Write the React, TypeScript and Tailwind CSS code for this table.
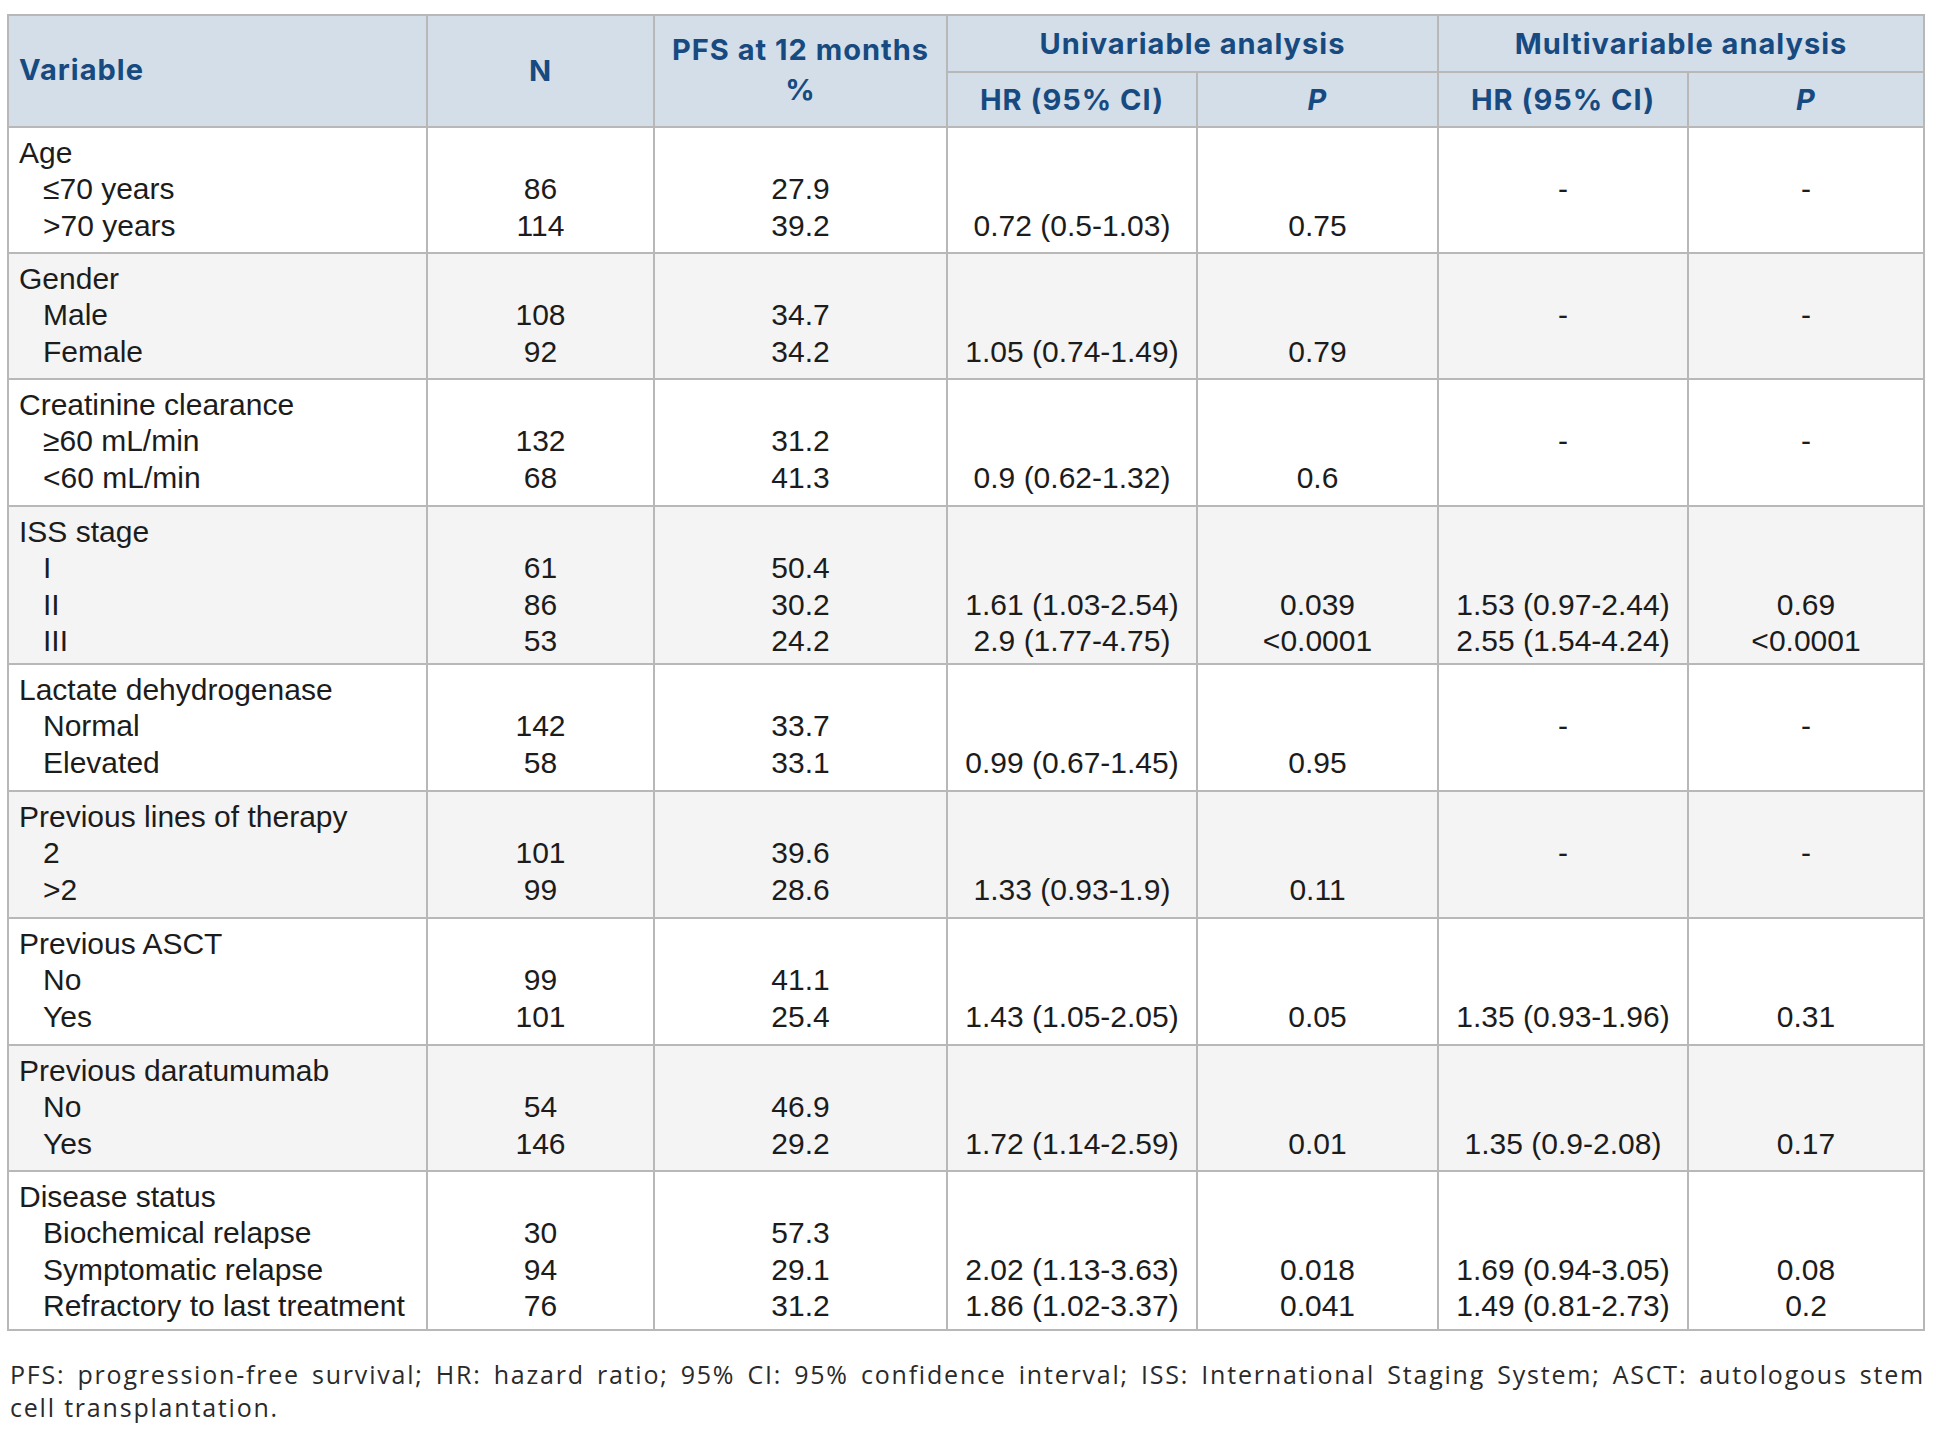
import React from "react";

type Row = {
  v: string[];
  n: string[];
  pfs: string[];
  hr: string[];
  p: string[];
  mhr: string[];
  mp: string[];
  h: string;
};

const rows: Row[] = [
  { v: ["Age", "≤70 years", ">70 years"], n: ["", "86", "114"], pfs: ["", "27.9", "39.2"], hr: ["", "", "0.72 (0.5-1.03)"], p: ["", "", "0.75"], mhr: ["", "-", ""], mp: ["", "-", ""], h: "h-[126px]" },
  { v: ["Gender", "Male", "Female"], n: ["", "108", "92"], pfs: ["", "34.7", "34.2"], hr: ["", "", "1.05 (0.74-1.49)"], p: ["", "", "0.79"], mhr: ["", "-", ""], mp: ["", "-", ""], h: "h-[126px]" },
  { v: ["Creatinine clearance", "≥60 mL/min", "<60 mL/min"], n: ["", "132", "68"], pfs: ["", "31.2", "41.3"], hr: ["", "", "0.9 (0.62-1.32)"], p: ["", "", "0.6"], mhr: ["", "-", ""], mp: ["", "-", ""], h: "h-[127px]" },
  { v: ["ISS stage", "I", "II", "III"], n: ["", "61", "86", "53"], pfs: ["", "50.4", "30.2", "24.2"], hr: ["", "", "1.61 (1.03-2.54)", "2.9 (1.77-4.75)"], p: ["", "", "0.039", "<0.0001"], mhr: ["", "", "1.53 (0.97-2.44)", "2.55 (1.54-4.24)"], mp: ["", "", "0.69", "<0.0001"], h: "h-[158px]" },
  { v: ["Lactate dehydrogenase", "Normal", "Elevated"], n: ["", "142", "58"], pfs: ["", "33.7", "33.1"], hr: ["", "", "0.99 (0.67-1.45)"], p: ["", "", "0.95"], mhr: ["", "-", ""], mp: ["", "-", ""], h: "h-[127px]" },
  { v: ["Previous lines of therapy", "2", ">2"], n: ["", "101", "99"], pfs: ["", "39.6", "28.6"], hr: ["", "", "1.33 (0.93-1.9)"], p: ["", "", "0.11"], mhr: ["", "-", ""], mp: ["", "-", ""], h: "h-[127px]" },
  { v: ["Previous ASCT", "No", "Yes"], n: ["", "99", "101"], pfs: ["", "41.1", "25.4"], hr: ["", "", "1.43 (1.05-2.05)"], p: ["", "", "0.05"], mhr: ["", "", "1.35 (0.93-1.96)"], mp: ["", "", "0.31"], h: "h-[127px]" },
  { v: ["Previous daratumumab", "No", "Yes"], n: ["", "54", "146"], pfs: ["", "46.9", "29.2"], hr: ["", "", "1.72 (1.14-2.59)"], p: ["", "", "0.01"], mhr: ["", "", "1.35 (0.9-2.08)"], mp: ["", "", "0.17"], h: "h-[126px]" },
  { v: ["Disease status", "Biochemical relapse", "Symptomatic relapse", "Refractory to last treatment"], n: ["", "30", "94", "76"], pfs: ["", "57.3", "29.1", "31.2"], hr: ["", "", "2.02 (1.13-3.63)", "1.86 (1.02-3.37)"], p: ["", "", "0.018", "0.041"], mhr: ["", "", "1.69 (0.94-3.05)", "1.49 (0.81-2.73)"], mp: ["", "", "0.08", "0.2"], h: "h-[159px]" },
];

function Lines({ items, indent }: { items: string[]; indent?: boolean }) {
  return (
    <div className="flex flex-col">
      {items.map((t, i) => (
        <div key={i} className={`leading-[36.4px] whitespace-nowrap ${indent && i > 0 ? "pl-[24px]" : ""}`}>
          {t === "" ? "\u00a0" : t}
        </div>
      ))}
    </div>
  );
}

const td = "border-2 border-[#b8b8b8] align-top pt-[7px] text-center font-['Liberation_Sans',Arial,sans-serif]";
const th = "border-2 border-[#b8b8b8] font-bold text-[#164a80] text-[29px] tracking-[1px] text-center align-middle";

export default function App() {
  return (
    <div className="bg-white min-h-[1434px] w-[1936px] pl-[7px] pt-[14px] text-[#1c1c1c]">
      <table className="table-fixed border-collapse w-[1916px] text-[30px] font-['Liberation_Sans',Arial,sans-serif]">
        <colgroup>
          <col className="w-[419px]" />
          <col className="w-[227px]" />
          <col className="w-[293px]" />
          <col className="w-[250px]" />
          <col className="w-[241px]" />
          <col className="w-[250px]" />
          <col className="w-[236px]" />
        </colgroup>
        <thead className="bg-[#d3dee8] font-['Inter',sans-serif]">
          <tr className="h-[57px]">
            <th rowSpan={2} className={`${th} !text-left pl-[10px] pb-[2px]`}>Variable</th>
            <th rowSpan={2} className={th}>N</th>
            <th rowSpan={2} className={`${th} leading-[40px] pb-[2px]`}>
              PFS at 12 months
              <br />%
            </th>
            <th colSpan={2} className={th}>Univariable analysis</th>
            <th colSpan={2} className={th}>Multivariable analysis</th>
          </tr>
          <tr className="h-[55px]">
            <th className={th}>HR (95% CI)</th>
            <th className={`${th} italic`}>P</th>
            <th className={th}>HR (95% CI)</th>
            <th className={`${th} italic`}>P</th>
          </tr>
        </thead>
        <tbody>
          {rows.map((r, i) => (
            <tr key={i} className={`${r.h} ${i % 2 === 1 ? "bg-[#f4f4f4]" : "bg-white"}`}>
              <td className={`${td} !text-left pl-[10px]`}>
                <Lines items={r.v} indent />
              </td>
              <td className={td}><Lines items={r.n} /></td>
              <td className={td}><Lines items={r.pfs} /></td>
              <td className={td}><Lines items={r.hr} /></td>
              <td className={td}><Lines items={r.p} /></td>
              <td className={td}><Lines items={r.mhr} /></td>
              <td className={td}><Lines items={r.mp} /></td>
            </tr>
          ))}
        </tbody>
      </table>
      <div className="mt-[27px] w-[1918px] pl-[3px] text-[25px] leading-[33px] tracking-[1.8px] text-[#2a2a2a] font-['Open_Sans',sans-serif]">
        <p className="text-justify [text-align-last:justify]">
          PFS: progression-free survival; HR: hazard ratio; 95% CI: 95% confidence interval; ISS: International Staging System; ASCT: autologous stem
        </p>
        <p>cell transplantation.</p>
      </div>
    </div>
  );
}
